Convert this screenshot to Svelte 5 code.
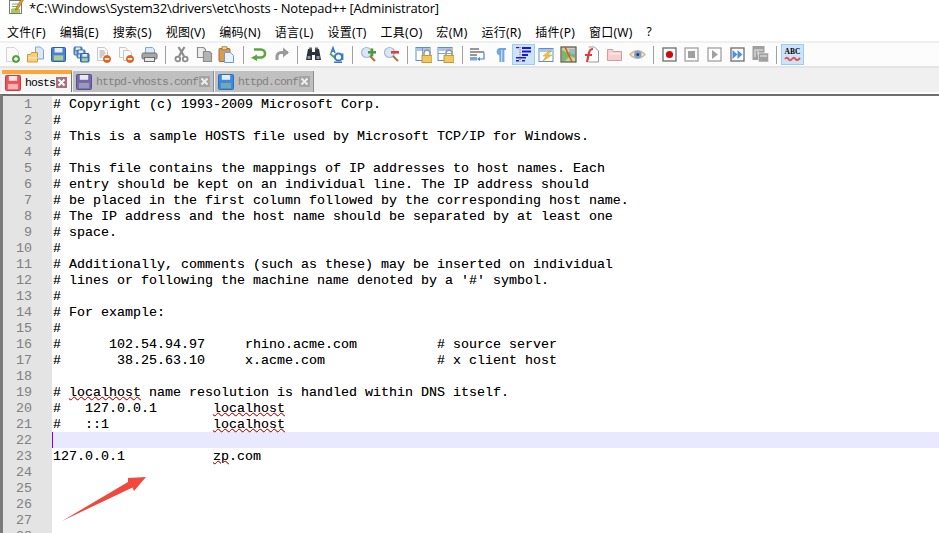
<script>
  const menus = ['文件(F)','编辑(E)','搜索(S)','视图(V)','编码(N)','语言(L)','设置(T)','工具(O)','宏(M)','运行(R)','插件(P)','窗口(W)','?'];
  const S = (t) => ({ t, s: true });
  const lines = [
    ['# Copyright (c) 1993-2009 Microsoft Corp.'],
    ['#'],
    ['# This is a sample HOSTS file used by Microsoft TCP/IP for Windows.'],
    ['#'],
    ['# This file contains the mappings of IP addresses to host names. Each'],
    ['# entry should be kept on an individual line. The IP address should'],
    ['# be placed in the first column followed by the corresponding host name.'],
    ['# The IP address and the host name should be separated by at least one'],
    ['# space.'],
    ['#'],
    ['# Additionally, comments (such as these) may be inserted on individual'],
    ["# lines or following the machine name denoted by a '#' symbol."],
    ['#'],
    ['# For example:'],
    ['#'],
    ['#      102.54.94.97     rhino.acme.com          # source server'],
    ['#       38.25.63.10     x.acme.com              # x client host'],
    [''],
    ['# ', S('localhost'), ' name resolution is handled within DNS itself.'],
    ['#   127.0.0.1       ', S('localhost')],
    ['#   ::1             ', S('localhost')],
    [''],
    ['127.0.0.1           ', S('zp'), '.com'],
    [''],[''],[''],[''],['']
  ];
</script>

{#snippet floppy(x, y, w, body, dark, label)}
  <rect x={x} y={y} width={w} height={w} rx="1" fill={body} stroke={dark} />
  <rect x={x + w*0.22} y={y + 0.5} width={w*0.56} height={w*0.32} fill="#fff" opacity="0.85" />
  <rect x={x + w*0.16} y={y + w*0.56} width={w*0.68} height={w*0.36} fill={label} />
{/snippet}
{#snippet minus(x, y)}
  <circle cx={x} cy={y} r="3.6" fill="#e8691c" stroke="#b9480f" stroke-width=".6" />
  <rect x={x-2.2} y={y-.8} width="4.4" height="1.6" fill="#fff" />
{/snippet}
{#snippet lock(x, y)}
  <path d="M{x+2} {y+5}v-2.4a3 3 0 0 1 6 0v2.4" fill="none" stroke="#9a9a9a" stroke-width="1.6" />
  <rect x={x} y={y+5} width="10" height="7" fill="#f0c860" stroke="#c69a3a" />
{/snippet}
{#snippet win(x, y)}
  <rect x={x+.5} y={y+.5} width="14" height="13" fill="#fff" stroke="#5f8fc8" />
  <rect x={x+1} y={y+1} width="13" height="3" fill="#a9c6ea" />
{/snippet}
{#snippet glass(c, dx)}
  <circle cx="6.5" cy="6.5" r="5" fill="#dbe7f7" stroke="#a4bcdc" stroke-width="1.2" />
  <path d="M10 10l5 5" stroke="#a8794a" stroke-width="2.2" />
  <rect x="8" y="5" width="8" height="2.6" fill={c} />
  {#if dx}<rect x="10.7" y="2.4" width="2.6" height="8" fill={c} />{/if}
{/snippet}

<div class="app">
  <header class="title">
    <svg class="logo" viewBox="0 0 18 18" width="18" height="18">
      <rect x="2.5" y="3.5" width="12" height="13" fill="#fff" stroke="#6f7f6a" />
      <path d="M5 7h7M5 9.5h7M5 12h5" stroke="#7fa84f" />
      <rect x="4" y="12" width="9" height="4" fill="#a9c65f" />
      <path d="M9 11L15 1l2 1.2L11 12l-2.5 1z" fill="#e8a03a" stroke="#8a5a1c" stroke-width=".6" />
    </svg>
    <span>*C:\Windows\System32\drivers\etc\hosts - Notepad++ [Administrator]</span>
  </header>

  <nav class="menu">
    {#each menus as m}<span>{m}</span>{/each}
  </nav>

  <div class="toolbar">
    <span class="btn"><svg viewBox="0 0 17 17"><path d="M2.5 1.5h8l4 4v10h-12z" fill="#fafafa" stroke="#d5d5d5"/><circle cx="12" cy="13" r="3.6" fill="#5aa83c" stroke="#3c7f28" stroke-width=".6"/><path d="M10 13h4M12 11v4" stroke="#fff" stroke-width="1.3"/></svg></span>
    <span class="btn"><svg viewBox="0 0 17 17"><path d="M8.5 1h5l3 3v9h-8z" fill="#dbe8f8" stroke="#7ea7d8"/><path d="M.5 8.5h3l1-2h6v9.5h-10z" fill="#f5cf7a" stroke="#d09a38"/><rect x="1.5" y="11" width="9" height="1.5" fill="#fbe6ae"/></svg></span>
    <span class="btn"><svg viewBox="0 0 17 17">{@render floppy(1.5, 1.5, 14, '#4a82cf', '#2f5fa8', '#a8cf8e')}</svg></span>
    <span class="btn"><svg viewBox="0 0 17 17">{@render floppy(1, 1, 8, '#5f8fc8', '#4170a8', '#cfe0f4')}{@render floppy(4, 4, 8, '#5f8fc8', '#4170a8', '#cfe0f4')}{@render floppy(7.5, 7.5, 8.5, '#4a82cf', '#2f5fa8', '#a8cf8e')}</svg></span>
    <span class="btn"><svg viewBox="0 0 17 17"><path d="M2.5 1.5h7l3 3v10h-10z" fill="#fafafa" stroke="#c8c8c8"/><path d="M4.5 5h5M4.5 7h6M4.5 9h5M4.5 11h3" stroke="#a0a0a0"/>{@render minus(12, 13)}</svg></span>
    <span class="btn"><svg viewBox="0 0 17 17"><path d="M1.5 1.5h6l2 2v8h-8z" fill="#fafafa" stroke="#c8c8c8"/><path d="M5.5 4.5h6l2 2v8h-8z" fill="#fafafa" stroke="#c8c8c8"/>{@render minus(12, 13)}</svg></span>
    <span class="btn"><svg viewBox="0 0 17 17"><path d="M4.5 7V1.5h7l2 2V7" fill="#dbe8f8" stroke="#7ea7d8"/><rect x="1" y="7" width="15" height="6" rx="1.5" fill="#a8a8a8" stroke="#6c6c6c"/><rect x="3.5" y="11.5" width="10" height="4" fill="#e8e8e8" stroke="#6c6c6c"/></svg></span>
    <i class="sep"></i>
    <span class="btn"><svg viewBox="0 0 17 17"><path d="M11.5 1L6 10M5.5 1L11 10" stroke="#8c8c8c" stroke-width="2.2" fill="none"/><circle cx="4.8" cy="13" r="2.4" fill="none" stroke="#8c8c8c" stroke-width="1.8"/><circle cx="12.2" cy="13" r="2.4" fill="none" stroke="#8c8c8c" stroke-width="1.8"/></svg></span>
    <span class="btn"><svg viewBox="0 0 17 17"><path d="M1.5 1.5h6l2 2v8h-8z" fill="#eee" stroke="#8e8e8e" stroke-width="1.2"/><path d="M7.5 5.5h6l2 2v8h-8z" fill="#b4b4b4" stroke="#8e8e8e" stroke-width="1.2"/></svg></span>
    <span class="btn"><svg viewBox="0 0 17 17"><rect x="1" y="2.5" width="11" height="13" rx="1" fill="#d99a55" stroke="#a86e30"/><rect x="4" y=".8" width="5" height="3" fill="#e7d6a8" stroke="#8a6a35" stroke-width=".7"/><path d="M6.5 6.5h6l3 3v7h-9z" fill="#eaf2fc" stroke="#6f9bd4"/></svg></span>
    <i class="sep"></i>
    <span class="btn"><svg viewBox="0 0 17 17"><path d="M4 3.5h7a4 4 0 0 1 0 8H4" fill="none" stroke="#5aa83c" stroke-width="2.6"/><path d="M7 8.5L1 11.700 7 15z" fill="#5aa83c"/></svg></span>
    <span class="btn"><svg viewBox="0 0 17 17"><path d="M15 6.5H8a4 4 0 0 0-4 4V14" fill="none" stroke="#9a9a9a" stroke-width="3"/><path d="M10 1.5L16 6.5l-6 5z" fill="#9a9a9a"/></svg></span>
    <i class="sep"></i>
    <span class="btn"><svg viewBox="0 0 17 17"><path d="M3 3h4v3h3V3h4l2 11h-6V9H7v5H1z" fill="#2c3038"/><rect x="4" y="1.5" width="3" height="2" fill="#666"/><rect x="10" y="1.5" width="3" height="2" fill="#666"/><rect x="2.5" y="10" width="3" height="3" fill="#8a94a8"/><rect x="11.5" y="10" width="3" height="3" fill="#8a94a8"/></svg></span>
    <span class="btn"><svg viewBox="0 0 17 17"><path d="M3 7L5 1.5 7 7M3.800 5.200h2.400" fill="none" stroke="#3a78c8" stroke-width="1.4"/><path d="M2 7.500L7 12" stroke="#5aa83c" stroke-width="2"/><circle cx="10.500" cy="11" r="3.600" fill="none" stroke="#3a78c8" stroke-width="2"/><path d="M6 16.500h8M14.500 7.500V14" stroke="#3a78c8" stroke-width="1.800"/></svg></span>
    <i class="sep"></i>
    <span class="btn"><svg viewBox="0 0 17 17">{@render glass('#4f9a3a', true)}</svg></span>
    <span class="btn"><svg viewBox="0 0 17 17">{@render glass('#e0403a', false)}</svg></span>
    <i class="sep"></i>
    <span class="btn"><svg viewBox="0 0 17 17">{@render win(0.5, 1)}<rect x="7" y="1.500" width=".8" height="12" fill="#5f8fc8"/>{@render lock(7, 4.5)}</svg></span>
    <span class="btn"><svg viewBox="0 0 17 17">{@render win(0.5, 1)}<rect x="1" y="7" width="13" height=".8" fill="#5f8fc8"/>{@render lock(7, 4.5)}</svg></span>
    <i class="sep"></i>
    <span class="btn"><svg viewBox="0 0 17 17"><path d="M1 3h9M1 6h14M1 9h7" stroke="#333" stroke-width="1.200"/><path d="M15 6.500v6.500H10" fill="none" stroke="#4f80c4" stroke-width="1.200"/><path d="M11 11v4l-3-2z" fill="#4f80c4"/><rect x="1" y="11" width="7" height="3.500" fill="#7ea7d8"/></svg></span>
    <span class="btn"><svg viewBox="0 0 17 17"><path d="M7 2h7v2h-1.600v12h-2.200V4H9.400v12H7.400V9.500A4 4 0 0 1 7 2z" fill="#6ea7e2"/></svg></span>
    <span class="btn on"><svg viewBox="0 0 17 17"><path d="M5 1v15" stroke="#d02020" stroke-dasharray="1 1.400"/><rect x="1" y="1" width="3" height="1.200" fill="#1a1acc"/><rect x="7" y="1" width="9" height="2" fill="#1a1acc"/><rect x="7" y="4.500" width="9" height="2" fill="#1a1acc"/><rect x="7" y="8" width="6" height="2" fill="#1a1acc"/><rect x="1" y="11" width="10" height="1.500" fill="#1a1acc"/><rect x="1" y="14" width="3" height="1.500" fill="#1a1acc"/><rect x="7" y="14" width="3" height="1.500" fill="#1a1acc"/></svg></span>
    <span class="btn"><svg viewBox="0 0 17 17">{@render win(0.5, 2)}<path d="M11 5L5 10h3l-3 5 9-6h-4l3-4z" fill="#f0c040" stroke="#c89a2a" stroke-width=".5"/></svg></span>
    <span class="btn"><svg viewBox="0 0 17 17"><rect x="1" y="1" width="15" height="15" fill="#c8d890" stroke="#555" stroke-width="1.200"/><path d="M2 4l6 3 4-4 3 4v5l-5-2-5 5H2z" fill="#7fb56a"/><path d="M5 1l7 15" stroke="#e05030" stroke-width="1.600"/><path d="M9 3h6v5H11z" fill="#9ab8d8"/></svg></span>
    <span class="btn"><svg viewBox="0 0 17 17"><path d="M5.500 1h6l4 4v11h-10" fill="#fff" stroke="#9a9a9a"/><path d="M4 16l2-9c.6-3 2-4 4-4M2 9h7" fill="none" stroke="#e03a3a" stroke-width="2.200"/></svg></span>
    <span class="btn"><svg viewBox="0 0 17 17"><path d="M1.500 3.500h5l1 2h8v9h-14z" fill="#f6cfcf" stroke="#d89a9a"/><rect x="3" y="7" width="11" height="1.400" fill="#fbeaea"/></svg></span>
    <span class="btn"><svg viewBox="0 0 17 17"><path d="M.8 8.500Q8.500 1 16.200 8.500 8.500 16 .8 8.500z" fill="#f4f0e0" stroke="#c8bc90" stroke-width="1.200"/><circle cx="8.800" cy="8.500" r="3.800" fill="#7f9fd0"/><circle cx="8.800" cy="8.500" r="1.500" fill="#2c3e60"/></svg></span>
    <i class="sep"></i>
    <span class="btn"><svg viewBox="0 0 17 17"><rect x="2" y="2" width="13" height="13" fill="#fff" stroke="#6c6c6c" stroke-width="1.300"/><circle cx="8.500" cy="8.500" r="3.600" fill="#cc0a0a"/></svg></span>
    <span class="btn"><svg viewBox="0 0 17 17"><rect x="2" y="2" width="13" height="13" fill="#fff" stroke="#a0a0a0" stroke-width="1.300"/><rect x="5" y="5" width="7" height="7" fill="#a0a0a0"/></svg></span>
    <span class="btn"><svg viewBox="0 0 17 17"><rect x="2" y="2" width="13" height="13" fill="#fff" stroke="#a0a0a0" stroke-width="1.300"/><path d="M6 4l6 4.500-6 4.500z" fill="#a0a0a0"/></svg></span>
    <span class="btn"><svg viewBox="0 0 17 17"><rect x="2" y="2" width="13" height="13" fill="#fff" stroke="#6c6c6c" stroke-width="1.300"/><path d="M3.500 4l5 4.500-5 4.500zM8.500 4l5 4.500-5 4.500z" fill="#4f90e0"/></svg></span>
    <span class="btn"><svg viewBox="0 0 17 17"><rect x="0.500" y="0" width="12" height="14" fill="#a0a0a0"/><path d="M2 4h9M2 6h2M5 6h2M2 8h2M5 8h2M2 10h2" stroke="#eee"/><rect x="6.500" y="7" width="10" height="9" fill="#a0a0a0" stroke="#f4f4f4" stroke-width=".6"/><path d="M8 10h7" stroke="#eee"/></svg></span>
    <i class="sep"></i>
    <span class="btn on"><svg viewBox="0 0 17 17"><text x="8.500" y="8" text-anchor="middle" class="abc">ABC</text><path d="M1 13q2-2.500 3.500 0t3.500 0 3.500 0 4.500-1" fill="none" stroke="#e85050" stroke-width="2"/></svg></span>
  </div>

  <div class="tabbar">
    <div class="tab active">
      <svg viewBox="0 0 16 16" width="16" height="16">{@render floppy(.5, .5, 15, '#f0525a', '#d83840', '#fbb0b4')}</svg>
      <span class="label">hosts</span>
      <svg class="x" viewBox="0 0 11 11" width="11" height="11"><rect width="11" height="11" fill="#a8707a"/><path d="M2.500 2.500l6 6M8.500 2.500l-6 6" stroke="#fff" stroke-width="2"/></svg>
    </div>
    <div class="tab">
      <svg viewBox="0 0 16 16" width="16" height="16">{@render floppy(.5, .5, 15, '#7468a8', '#5c5090', '#9a9ab8')}</svg>
      <span class="label">httpd-vhosts.conf</span>
      <svg class="x" viewBox="0 0 11 11" width="11" height="11"><rect width="11" height="11" fill="#a4a4a4"/><path d="M2.500 2.500l6 6M8.500 2.500l-6 6" stroke="#eee" stroke-width="2"/></svg>
    </div>
    <div class="tab">
      <svg viewBox="0 0 16 16" width="16" height="16">{@render floppy(.5, .5, 15, '#3c88dc', '#2c70c0', '#70a8b8')}</svg>
      <span class="label">httpd.conf</span>
      <svg class="x" viewBox="0 0 11 11" width="11" height="11"><rect width="11" height="11" fill="#a4a4a4"/><path d="M2.500 2.500l6 6M8.500 2.500l-6 6" stroke="#eee" stroke-width="2"/></svg>
    </div>
  </div>

  <main class="editor">
    {#each lines as parts, i}
      <div class="row" class:current={i === 21}>
        <span class="num">{i + 1}</span>
        <span class="code">{#each parts as p}{#if typeof p === 'string'}{p}{:else}<u>{p.t}</u>{/if}{/each}</span>
      </div>
    {/each}
    <svg class="arrow" viewBox="0 0 939 533" width="939" height="533">
      <path d="M62 521L128 482 128 478 146 477 134 491 132.500 487.500z" fill="#f2473c" />
    </svg>
  </main>
</div>

<style>
  :global(body) { margin: 0; background: #fff; }
  .app { width: 939px; height: 533px; overflow: hidden; position: relative; display: flex; flex-direction: column; font-family: "Open Sans", "Noto Sans CJK SC", sans-serif; color: #000; }

  .title { height: 22px; flex: none; display: flex; align-items: flex-start; padding-left: 7px; gap: 4px; font-size: 13px; line-height: 16px; letter-spacing: -.21px; box-sizing: border-box; }
  .logo { flex: none; margin-top: -3px; }

  .menu { height: 19px; flex: none; display: flex; align-items: center; gap: 13.85px; padding-left: 7px; font-size: 12px; letter-spacing: .27px; font-family: "Noto Sans", "Noto Sans CJK SC", sans-serif; }

  .toolbar { height: 23px; flex: none; display: flex; align-items: center; padding-left: 1.5px; background: #fcfcfc; border-top: 2px solid #f0f0f0; border-bottom: 2px solid #e4e4e4; }
  .btn { width: 22.75px; height: 21px; flex: none; display: flex; align-items: center; justify-content: center; box-sizing: border-box; }
  .btn svg { width: 17px; height: 17px; display: block; }
  .btn.on { background: #cce4f9; outline: 1px solid #9bcdf4; outline-offset: -1px; }
  .sep { width: 1px; height: 18px; flex: none; background: #a0a0a0; margin: 0 4px 0 4.25px; }
  .abc { font: bold 7.500px "Liberation Serif", serif; fill: #000; }

  .tabbar { height: 26px; flex: none; display: flex; align-items: flex-end; padding-left: 2px; background: #f0f0f0; gap: 1px; box-sizing: border-box; border-bottom: 2px solid #fff; }
  .tab { height: 21px; display: flex; align-items: center; gap: 4px; padding: 0 3px; box-sizing: border-box; background: #c0c0c0; border-right: 1px solid #8e8e8e; color: #808080; font-size: 11.5px; font-family: "Liberation Mono", monospace; letter-spacing: -0.9px; }
  .tab.active { height: 22px; padding: 0 4px 1px 3px; background: #f6f6f6; color: #000; border-top: 4px solid #fba637; border-right-color: #777; }
  .tab svg { flex: none; }
  .tab .x { margin-left: -3px; }
  .label { line-height: 1; padding-top: 1px; }

  .editor { flex: 1; position: relative; border-top: 2px solid #6f6f6f; border-left: 3px solid #7a7a7a; overflow: hidden; font: 13.333px/16px "Liberation Mono", monospace; }
  .row { height: 16px; display: flex; white-space: pre; }
  .row.current { background: #e8e8ff; }
  .num { width: 29px; padding: 1px 20px 0 0; flex: none; box-sizing: content-box; height: 15px; background: #e4e4e4; color: #808080; text-align: right; }
  .code { padding: 1px 0 0 1px; text-shadow: 0 0 .3px rgba(0,0,0,.4); }
  .row.current .code { border-left: 1px solid #8000ff; padding-left: 0; height: 15px; }
  u { text-decoration: underline wavy #e00000 1px; text-underline-offset: 0; }
  .arrow { position: absolute; left: -3px; top: -96px; pointer-events: none; }
</style>
